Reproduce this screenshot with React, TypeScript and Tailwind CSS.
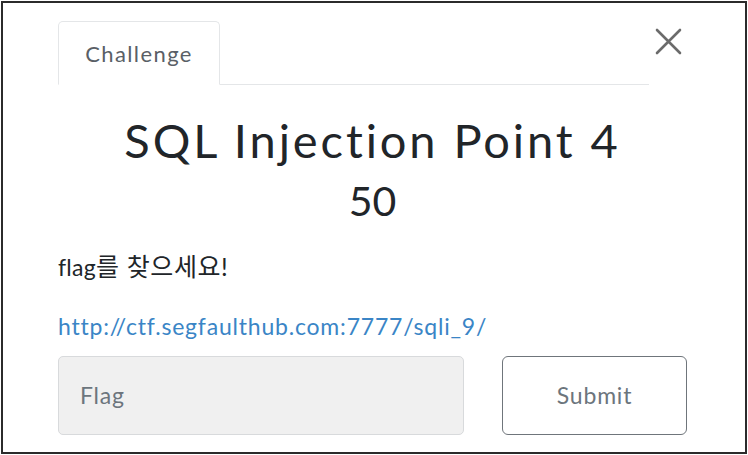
import React from "react";

const App: React.FC = () => {
  return (
    <div className="w-[748px] h-[455px] bg-white pl-px pt-px" style={{ fontFamily: "Lato, 'Noto Sans CJK KR', sans-serif" }}>
      <div className="w-[746px] h-[453px] border-2 border-[#2b2b2b] bg-white pl-[55px] pr-[58px] pt-[18px]">
        <div className="flex items-start">
          <div className="flex w-[591px] border-b border-[#e4e6e8]">
            <div className="w-[162px] h-[64px] -mb-px border border-b-white border-[#e4e6e8] rounded-t-[5px] bg-white flex items-center justify-center text-[22px] tracking-[1.4px] text-[#5a5f66]">
              Challenge
            </div>
          </div>
          <button className="ml-[6px] mt-[7px] text-[#6b6b6b]">
            <svg width="27" height="27" viewBox="0 0 27 27" fill="none" stroke="currentColor" strokeWidth="2.6" strokeLinecap="round">
              <path d="M2 2 L25 25 M25 2 L2 25" />
            </svg>
          </button>
        </div>
        <h2 className="text-center text-[47px] font-normal leading-none mt-[32px] text-[#212529] tracking-[2.9px]">SQL Injection Point 4</h2>
        <h3 className="text-center text-[41px] font-normal leading-none mt-[16px] text-[#212529]">50</h3>
        <p className="mt-[33px] h-[23px] text-[23px] leading-none text-[#212529]">
          <span className="tracking-[0.3px]">flag</span>
          <span className="text-[25px] tracking-[0.6px]">를 찾으세요!</span>
        </p>
        <a className="block mt-[38px] text-[23px] tracking-[0.8px] leading-none text-[#3a85c6]" href="#">http://ctf.segfaulthub.com:7777/sqli_9/</a>
        <div className="flex mt-[18px] gap-[38px]">
          <div className="w-[406px] h-[79px] bg-[#f0f0f0] border border-[#d8dadc] rounded-[5px] flex items-center pl-[21px] text-[23px] tracking-[0.8px] text-[#6c757d]">
            Flag
          </div>
          <button className="w-[185px] h-[79px] border-[1.5px] border-[#6f757b] rounded-[6px] bg-white text-[23px] tracking-[0.8px] text-[#6c757d]">
            Submit
          </button>
        </div>
      </div>
    </div>
  );
};

export default App;
